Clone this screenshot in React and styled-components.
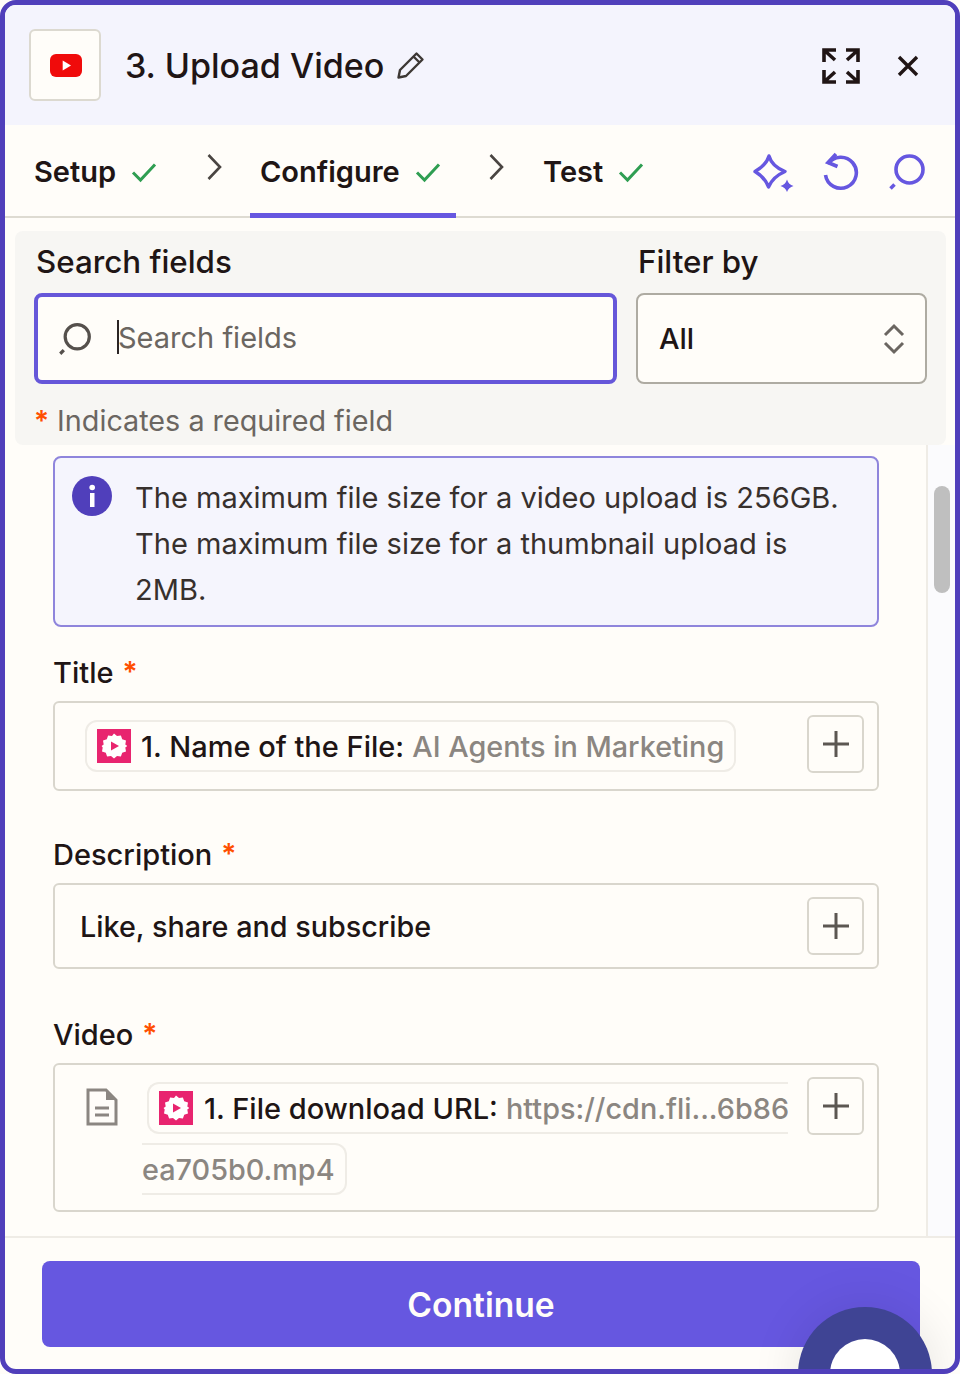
import React from "react";
import styled, { createGlobalStyle } from "styled-components";

const Global = createGlobalStyle`
  html, body { margin: 0; padding: 0; background: #fffdf9; }
  body { font-family: Inter, "Liberation Sans", sans-serif; color: #201515; }
  * { box-sizing: border-box; }
`;
const Frame = styled.div`
  position: relative; width: 960px; height: 1374px; overflow: hidden;
  border: 5px solid #503fbb; border-radius: 16px; background: #fffdf9;
  display: flex; flex-direction: column;
`;
const Header = styled.header`
  height: 120px; flex: none; background: #f4f4fd; display: flex; align-items: center;
  padding: 0 36px 0 24px;
`;
const AppTile = styled.div`
  width: 72px; height: 72px; border: 2px solid #dcd9d0; border-radius: 6px; background: #fffdf9;
  display: flex; align-items: center; justify-content: center; margin-right: 24px; padding-left: 1px;
`;
const Title = styled.h1`
  margin: 2px 0 0; font-size: 34.1px; font-weight: 500; line-height: 1; color: #201515;
`;
const Edit = styled.svg`margin-left: 12px;`;
const Spacer = styled.div`flex: 1;`;
const HeadActions = styled.div`display: flex; align-items: center; gap: 36px; padding-top: 2px;`;
const Tabs = styled.nav`
  height: 93px; flex: none; border-bottom: 2px solid #dedbd2; display: flex; align-items: stretch;
  padding: 0 29px 0 29px;
`;
const Tab = styled.div`
  position: relative; display: flex; align-items: center; gap: 14px; font-size: 29px; font-weight: 600;
  width: ${p => p.$w}px; padding-left: ${p => p.$pad || 0}px; padding-top: 2px;
  ${p => p.$active && `&::after { content: ""; position: absolute; left: 0; right: 0; bottom: -2px; height: 5px; background: #6657e0; }`}
`;
const Chevron = styled.div`
  width: ${p => p.$w}px; display: flex; align-items: center; justify-content: center;
  padding: 0 0 7px ${p => p.$shift || 0}px;
`;
const TabTools = styled.div`display: flex; align-items: center; gap: 29px; padding-top: 2px;`;
const SearchPanel = styled.section`
  margin: 13px 9px 0 10px; height: 214px; flex: none; background: #f7f6f3; border-radius: 8px; padding: 13px 20px 0 19px;
`;
const SearchGrid = styled.div`display: grid; grid-template-columns: 583px 291px; column-gap: 19px;`;
const FieldCol = styled.div`display: flex; flex-direction: column; gap: 13px;`;
const PanelLabel = styled.label`font-size: 31.3px; font-weight: 500; line-height: 36px; padding-left: 2px;`;
const SearchInput = styled.div`
  height: 91px; border: 4px solid #6657d9; border-radius: 8px; background: #fffdf9;
  display: flex; align-items: center; padding-left: 20px; gap: 26px; font-size: 29px; line-height: 36px; color: #6b6661;
`;
const Placeholder = styled.span`position: relative; display: block; margin-top: -2px;`;
const Caret = styled.span`position: absolute; left: -1px; top: 0; width: 1.5px; height: 34px; background: #2b2525;`;
const Select = styled.div`
  height: 91px; border: 2px solid #aeaba2; border-radius: 8px; background: #fffdf9;
  display: flex; align-items: center; justify-content: space-between; padding: 0 20px 0 21px;
  font-size: 29px; font-weight: 500;
`;
const Required = styled.div`
  margin-top: 19px; font-size: 28.75px; line-height: 36px; color: #6b6661; display: flex; gap: 8px; align-items: center;
`;
const Star = styled.span`color: #ff4f00; font-weight: 600; line-height: 1; font-size: 28px;`;
const Scroll = styled.div`
  flex: 1; min-height: 0; display: flex; overflow: hidden; border-bottom: 2px solid #efece6;
`;
const Content = styled.div`flex: 1; padding: 11px 0 0 48px; border-right: 2px solid #efece6;`;
const Track = styled.div`width: 27px; flex: none; background: #fbfbfd; padding: 41px 0 0 6px;`;
const Thumb = styled.div`width: 16px; height: 107px; border-radius: 8px; background: #bfbfbf;`;
const Info = styled.div`
  width: 826px; height: 171px; border: 2px solid #8f85dc; border-radius: 8px; background: #f5f5fd; padding: 17px 16px 17px 17px; display: flex; gap: 23px;
`;
const InfoIcon = styled.svg`flex: none; margin-top: 1px;`;
const InfoText = styled.div`font-size: 29.03px; line-height: 46px; color: #37302d;`;
const Field = styled.div`display: flex; flex-direction: column; margin-top: ${p => p.$top}px;`;
const FieldLabel = styled.div`
  font-size: 29px; font-weight: 500; line-height: 36px; display: flex; gap: 9px; margin-bottom: 10px;
  ${Star} { margin-top: 3px; }
`;
const Box = styled.div`
  position: relative; width: 826px; height: ${p => p.$h}px; border: 2px solid #d9d6cd; border-radius: 6px; background: #fffdf9;
  padding: 17px 0 0 30px; font-size: 29px;
`;
const AddBtn = styled.div`
  position: absolute; right: 13px; top: 12px; width: 57px; height: 58px; border: 2px solid #d9d6cd; border-radius: 6px;
  background: #fffdf9; display: flex; align-items: center; justify-content: center;
`;
const Pill = styled.div`
  display: inline-flex; align-items: center; height: 52px; border: 2px solid #efece6; border-radius: 12px; padding: 0 10px;
  white-space: nowrap; font-size: 29px; gap: 10px;
`;
const PlainValue = styled.div`margin: 7px 0 0 -5px; line-height: 36px; font-size: 28.75px;`;
const Strong = styled.span`font-weight: 500; color: #201515;`;
const Grey = styled.span`color: #8b8681; font-weight: 500; font-size: 28.8px;`;
const Bolt = styled.div`width: 34px; height: 34px; background: #e8246f; display: flex; align-items: center; justify-content: center; flex: none;`;
const VideoRow = styled.div`display: flex; align-items: flex-start; gap: 29px; padding-left: 1px;`;
const DocIcon = styled.svg`flex: none; margin-top: 6px;`;
const PillOpen = styled(Pill)`
  width: 641px; overflow: hidden; border-right: 0; border-top-right-radius: 0; border-bottom-right-radius: 0; gap: 11px;
`;
const PillCont = styled(Pill)`
  margin: 9px 0 0 57px; border-left: 0; border-top-left-radius: 0; border-bottom-left-radius: 0; padding-left: 0;
`;
const Footer = styled.footer`flex: none; height: 131px; padding: 23px 35px 0 37px;`;
const Continue = styled.button`
  width: 878px; height: 86px; border: 0; border-radius: 8px; background: #6657e0; color: #fffdf9;
  font: 600 33.6px Inter, "Liberation Sans", sans-serif;
`;
const Launcher = styled.div`
  position: absolute; left: 793px; top: 1302px; width: 134px; height: 134px; border-radius: 50%;
  background: #3f4494; display: flex; justify-content: center; padding-top: 32px;
  box-shadow: 0 0 50px rgba(0, 0, 0, 0.1);
  &::after { content: ""; width: 70px; height: 70px; border-radius: 50%; background: #fff; }
`;

const Check = () => (
  <svg width="28" height="22" viewBox="0 0 28 22" fill="none"><path d="M3 11.5 10.5 19 25 3.5" stroke="#2f9e52" strokeWidth="3" /></svg>
);
const Chev = () => (
  <svg width="16" height="28" viewBox="0 0 16 28" fill="none"><path d="M2.5 2 14 14 2.5 26" stroke="#4a4542" strokeWidth="2.6" /></svg>
);
const Lens = ({ color, size = 38 }) => (
  <svg width={size} height={size} viewBox="0 0 38 38" fill="none">
    <circle cx="21.5" cy="16.5" r="13.5" stroke={color} strokeWidth="3.6" />
    <path d="M2.5 35.5 6.500 31.500" stroke={color} strokeWidth="3.6" />
  </svg>
);
const Plus = () => (
  <svg width="30" height="30" viewBox="0 0 30 30" fill="none"><path d="M15 2v26M2 15h26" stroke="#5c5752" strokeWidth="3" /></svg>
);
const ZapIcon = () => (
  <svg width="26" height="26" viewBox="0 0 26 26">
    <path fill="#fff" d="M13 1.500l3 2.600 3.900-.7 1.300 3.800 3.800 1.300-.7 3.900 2.100 1.600-2.100 1.600.7 3.900-3.800 1.300-1.300 3.800-3.900-.7-3 2.600-3-2.600-3.900.7-1.300-3.800-3.800-1.300.7-3.900L.6 14l2.100-1.600L2 8.500l3.800-1.300 1.300-3.800 3.900.7z" transform="translate(0 -1)" />
    <path fill="#e8246f" d="M10 8.500 18 13l-8 4.500z" />
  </svg>
);

export default function App() {
  return (
    <Frame>
      <Global />
      <Header>
        <AppTile>
          <svg width="32" height="23" viewBox="0 0 32 23">
            <rect width="32" height="23" rx="6" fill="#f00b0b" />
            <path d="M12.700 6.500 21 11.500l-8.300 5z" fill="#fff" />
          </svg>
        </AppTile>
        <Title>3. Upload Video</Title>
        <Edit width="30" height="30" viewBox="0 0 30 30" fill="none">
          <path d="M2.500 27.500 4 20 20.500 3.500l6 6L10 26z M17.500 6.500l6 6" stroke="#3d3835" strokeWidth="2.4" strokeLinejoin="round" />
        </Edit>
        <Spacer />
        <HeadActions>
          <svg width="40" height="38" viewBox="0 0 40 38" fill="none" stroke="#201515" strokeWidth="3.6">
            <path d="M3 15V3h12M3 3l11 10" />
            <path d="M37 15V3H25M37 3 26 13" />
            <path d="M3 23v12h12M3 35l11-10" />
            <path d="M37 23v12H25M37 35 26 25" />
          </svg>
          <svg width="22" height="22" viewBox="0 0 22 22" fill="none"><path d="M2 2l18 18M20 2 2 20" stroke="#201515" strokeWidth="3.4" /></svg>
        </HeadActions>
      </Header>
      <Tabs>
        <Tab $w={131}>Setup <Check /></Tab>
        <Chevron $w={85} $shift={12}><Chev /></Chevron>
        <Tab $w={206} $active $pad={10}>Configure <Check /></Tab>
        <Chevron $w={80}><Chev /></Chevron>
        <Tab $w={203} $pad={7}>Test <Check /></Tab>
        <Spacer />
        <TabTools>
          <svg width="42" height="40" viewBox="0 0 42 40" fill="none">
            <path d="M17 4C19 11 24 16 33 19.500 26 22.500 20 27 16.500 35 13.500 27 9 23 3 19.500 9 16 15 11 17 4z" stroke="#6657e0" strokeWidth="3.400" strokeLinejoin="round" />
            <path d="M35 27.500Q36.500 32.500 41.500 34 36.500 35.500 35 40 33.500 35.500 28.500 34 33.500 32.500 35 27.500z" fill="#6657e0" />
          </svg>
          <svg width="36" height="40" viewBox="0 0 36 40" fill="none">
            <path d="M5 12a15.500 15.500 0 1 1-2.500 11" stroke="#6657e0" strokeWidth="3.6" />
            <path d="M13 2 5 10.500l9.500 4" stroke="#6657e0" strokeWidth="3.6" />
          </svg>
          <Lens color="#6657e0" />
        </TabTools>
      </Tabs>
      <SearchPanel>
        <SearchGrid>
          <FieldCol>
            <PanelLabel>Search fields</PanelLabel>
            <SearchInput>
              <Lens color="#55504c" size={34} />
              <Placeholder><Caret />Search fields</Placeholder>
            </SearchInput>
          </FieldCol>
          <FieldCol>
            <PanelLabel>Filter by</PanelLabel>
            <Select>
              All
              <svg width="22" height="32" viewBox="0 0 22 32" fill="none">
                <path d="M2 12 11 3l9 9M2 20l9 9 9-9" stroke="#6b6661" strokeWidth="3" />
              </svg>
            </Select>
          </FieldCol>
        </SearchGrid>
        <Required><Star>*</Star>Indicates a required field</Required>
      </SearchPanel>
      <Scroll>
        <Content>
          <Info>
            <InfoIcon width="40" height="40" viewBox="0 0 40 40">
              <circle cx="20" cy="20" r="20" fill="#503fbb" />
              <rect x="18" y="17" width="4.500" height="14" fill="#fff" />
              <circle cx="20.200" cy="11.500" r="2.800" fill="#fff" />
            </InfoIcon>
            <InfoText>
              The maximum file size for a video upload is 256GB.<br />
              The maximum file size for a thumbnail upload is<br />
              2MB.
            </InfoText>
          </Info>
          <Field $top={28}>
            <FieldLabel>Title <Star>*</Star></FieldLabel>
            <Box $h={90}>
              <Pill>
                <Bolt><ZapIcon /></Bolt>
                <span><Strong>1. Name of the File:</Strong> <Grey>AI Agents in Marketing</Grey></span>
              </Pill>
              <AddBtn><Plus /></AddBtn>
            </Box>
          </Field>
          <Field $top={46}>
            <FieldLabel>Description <Star>*</Star></FieldLabel>
            <Box $h={86}>
              <PlainValue><Strong>Like, share and subscribe</Strong></PlainValue>
              <AddBtn><Plus /></AddBtn>
            </Box>
          </Field>
          <Field $top={48}>
            <FieldLabel>Video <Star>*</Star></FieldLabel>
            <Box $h={149}>
              <VideoRow>
                <DocIcon width="32" height="38" viewBox="0 0 32 38" fill="none">
                  <path d="M2 2h18l10 10v24H2z" stroke="#8b8681" strokeWidth="3" />
                  <path d="M20 2v10h10z" fill="#8b8681" />
                  <path d="M9 20h14M9 27h14" stroke="#8b8681" strokeWidth="3" />
                </DocIcon>
                <PillOpen>
                  <Bolt><ZapIcon /></Bolt>
                  <span><Strong>1. File download URL:</Strong> <Grey>https://cdn.fli...6b86</Grey></span>
                </PillOpen>
              </VideoRow>
              <PillCont><Grey>ea705b0.mp4</Grey></PillCont>
              <AddBtn><Plus /></AddBtn>
            </Box>
          </Field>
        </Content>
        <Track><Thumb /></Track>
      </Scroll>
      <Footer>
        <Continue>Continue</Continue>
      </Footer>
      <Launcher />
    </Frame>
  );
}
